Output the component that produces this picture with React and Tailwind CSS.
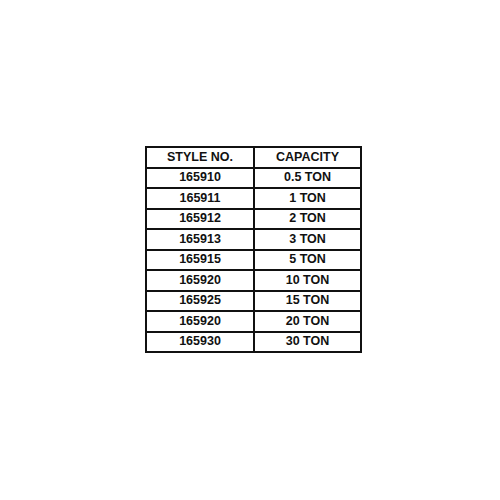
const rows = [
  ['STYLE NO.', 'CAPACITY'],
  ['165910', '0.5 TON'],
  ['165911', '1 TON'],
  ['165912', '2 TON'],
  ['165913', '3 TON'],
  ['165915', '5 TON'],
  ['165920', '10 TON'],
  ['165925', '15 TON'],
  ['165920', '20 TON'],
  ['165930', '30 TON'],
]

export default function App() {
  return (
    <div className="w-[500px] h-[500px] bg-white pt-[146px] pl-[145px]">
      <div
        className="w-[217px] border-2 border-[#111] text-[12.5px] font-bold text-[#111]"
        style={{ fontFamily: '"Liberation Sans", Arial, sans-serif' }}
      >
        {rows.map((r, i) => (
          <div
            key={i}
            className={`flex h-[18.5px] ${i > 0 ? 'box-content border-t-2 border-[#111]' : ''}`}
          >
            <div className="w-[106px] flex items-center justify-center border-r-2 border-[#111] box-content">
              {r[0]}
            </div>
            <div className="flex-1 flex items-center justify-center">{r[1]}</div>
          </div>
        ))}
      </div>
    </div>
  )
}
